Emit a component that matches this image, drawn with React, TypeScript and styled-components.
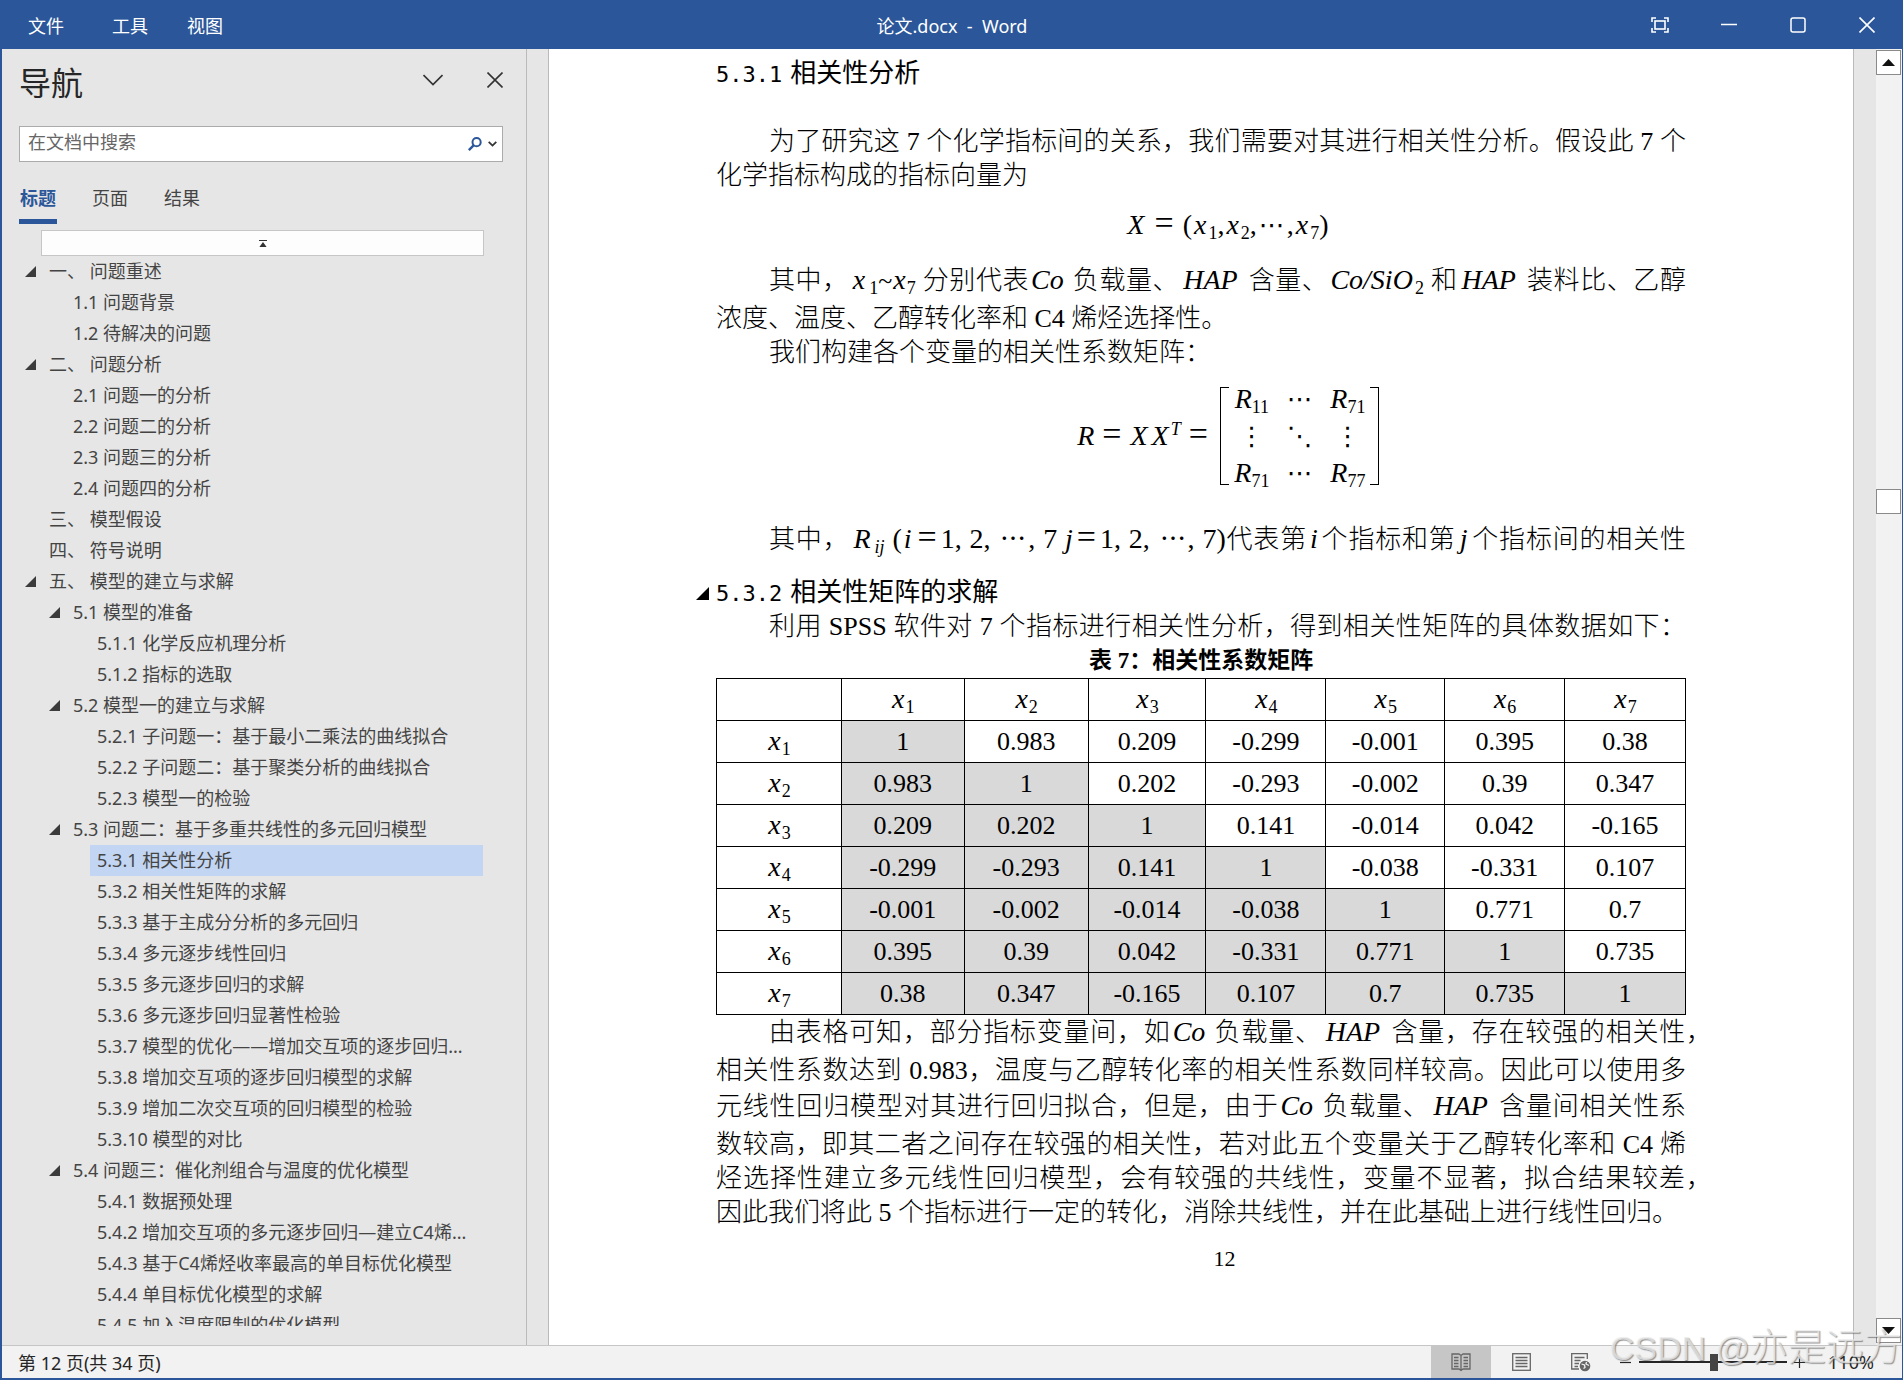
import React from "react";
import styled, { createGlobalStyle } from "styled-components";

const UI_FONT = `"Noto Sans", "Noto Sans CJK SC", sans-serif`;
const DOC_FONT = `"Liberation Serif", "Noto Sans CJK SC", serif`;
const BLUE = "#2b579a";

const GlobalStyle = createGlobalStyle`
  *, *::before, *::after { box-sizing: border-box; }
  body { margin: 0; font-family: ${UI_FONT}; font-size: 18px; color: #444; }
  button, input { font: inherit; color: inherit; margin: 0; }
  button { background: none; border: 0; padding: 0; cursor: pointer; }
  h1, h2, p, ul { margin: 0; padding: 0; font-weight: 400; }
  a { color: inherit; text-decoration: none; }
`;

const Shell = styled.div`
  position: relative;
  display: flex;
  flex-direction: column;
  height: 100vh;
  overflow: hidden;
  background: #e6e6e6;
  border: 0 solid ${BLUE};
  border-width: 0 1px 2px 2px;
`;

/* Title bar */
const TitleBar = styled.header`
  display: grid;
  grid-template-columns: 1fr auto 1fr;
  align-items: center;
  flex: none;
  height: 49px;
  color: #fff;
  background: ${BLUE};
`;
const Menus = styled.nav`
  display: flex;
  padding-left: 26px;
`;
const MenuButton = styled.button<{ $gap?: number }>`
  margin-right: ${(p) => p.$gap ?? 0}px;
`;
const DocTitle = styled.div`
  white-space: pre;
`;
const WindowButtons = styled.div`
  display: flex;
  justify-content: flex-end;
  padding-right: 1px;
`;
const WindowButton = styled.button`
  display: grid;
  place-items: center;
  width: 69px;
  height: 49px;
  svg { display: block; }
`;

/* Body */
const Body = styled.div`
  display: flex;
  flex: 1;
  min-height: 0;
`;
const Sidebar = styled.aside`
  display: flex;
  flex-direction: column;
  flex: none;
  width: 525px;
  padding: 0 23px 19px 17px;
  border-right: 1px solid #bababa;
`;
const Gutter = styled.div<{ $width: number; $side: "left" | "right" }>`
  flex: none;
  width: ${(p) => p.$width}px;
  border-${(p) => p.$side}: 1px solid #bababa;
`;
const PaneHead = styled.div`
  display: flex;
  align-items: flex-start;
  height: 68px;
  gap: 38px;
  padding-top: 15px;
`;
const PaneTitle = styled.h1`
  flex: 1;
  font-size: 32px;
  line-height: 38px;
  color: #262626;
`;
const IconButton = styled.button<{ $width: number }>`
  display: grid;
  place-items: center;
  width: ${(p) => p.$width}px;
  height: 32px;
  svg { display: block; }
`;
const SearchBox = styled.label`
  display: flex;
  align-items: center;
  height: 36px;
  margin-top: 9px;
  padding: 0 3px 0 8px;
  background: #fff;
  border: 1px solid #ababab;
`;
const SearchInput = styled.input`
  flex: 1;
  min-width: 0;
  height: 30px;
  padding: 0 0 4px;
  border: 0;
  outline: 0;
  background: none;
  &::placeholder { color: #666; opacity: 1; }
`;
const Tabs = styled.div`
  display: flex;
  gap: 34px;
  margin-top: 22px;
`;
const Tab = styled.button<{ $active?: boolean }>`
  min-width: 38px;
  height: 40px;
  padding: 0 0 8px;
  line-height: 28px;
  border-bottom: 5px solid ${(p) => (p.$active ? BLUE : "transparent")};
  color: ${(p) => (p.$active ? BLUE : "#444")};
  font-weight: ${(p) => (p.$active ? 700 : 400)};
`;
const JumpTop = styled.button`
  display: grid;
  place-items: center;
  flex: none;
  height: 26px;
  margin: 6px 19px 0 22px;
  background: #fdfdfd;
  border: 1px solid #c6c6c6;
`;
const Tree = styled.ul`
  flex: 1;
  min-height: 0;
  overflow: hidden;
  list-style: none;
  margin: 0 20px 0 0;
`;
const TreeItem = styled.li<{ $level: number }>`
  display: grid;
  grid-template-columns: 17px 1fr;
  align-items: center;
  height: 31px;
  padding-left: ${(p) => (p.$level - 1) * 24 + 6}px;
`;
const Fold = styled.button`
  display: block;
  width: 11px;
  height: 11px;
  background: #3b3b3b;
  clip-path: polygon(100% 0, 100% 100%, 0 100%);
`;
const TreeLink = styled.a<{ $selected?: boolean }>`
  grid-column: 2;
  height: 31px;
  padding-left: 7px;
  line-height: 31px;
  white-space: pre;
  background: ${(p) => (p.$selected ? "#c2d5f2" : "transparent")};
`;

/* Page */
const Page = styled.main`
  flex: 1;
  min-width: 0;
  overflow: hidden;
  background: #fff;
  color: #000;
  font-family: ${DOC_FONT};
  font-size: 26px;
  line-height: 34px;
`;
const Column = styled.article`
  max-width: 970px;
  margin: 0 auto;
  padding-top: 8px;
`;
const Heading = styled.h2<{ $top?: number }>`
  position: relative;
  display: flex;
  align-items: baseline;
  gap: 8px;
  height: 34px;
  margin-top: ${(p) => p.$top ?? 0}px;
  font-size: 26px;
  line-height: 34px;
`;
const HeadingNumber = styled.span`
  font-family: "DejaVu Sans Mono", monospace;
  font-size: 22px;
`;
const HeadingFold = styled.span`
  position: absolute;
  left: -20px;
  top: 11px;
  width: 13px;
  height: 13px;
  background: #000;
  clip-path: polygon(100% 0, 100% 100%, 0 100%);
`;
const Paragraph = styled.p<{ $top?: number }>`
  margin-top: ${(p) => p.$top ?? 0}px;
  font-weight: 300;
`;
const Line = styled.span<{ $indent?: boolean; $full?: boolean; $after?: number; $hang?: boolean }>`
  display: block;
  padding-left: ${(p) => (p.$indent ? 53 : 0)}px;
  padding-bottom: ${(p) => p.$after ?? 0}px;
  margin-right: ${(p) => (p.$hang ? -26 : 0)}px;
  white-space: ${(p) => (p.$full ? "normal" : "nowrap")};
  text-align-last: ${(p) => (p.$full ? "justify" : "left")};
`;
const Formula = styled.div<{ $top: number }>`
  display: flex;
  justify-content: center;
  align-items: center;
  margin-top: ${(p) => p.$top}px;
  padding-left: 53px;
  font-size: 28px;
  white-space: pre;
`;
const Var = styled.i<{ $gap?: number }>`
  margin: 0 ${(p) => p.$gap ?? 0}px;
  font-size: 28px;
  line-height: 0;
`;
const Sub = styled.sub`
  font-size: 18px;
  font-style: normal;
  line-height: 0;
  vertical-align: -5px;
`;
const Sup = styled.sup`
  font-size: 18px;
  line-height: 0;
  vertical-align: 10px;
`;
const Big = styled.span`
  font-size: 28px;
  line-height: 0;
`;
const Equals = styled.span<{ $gap: number }>`
  margin: 0 ${(p) => p.$gap}px;
  font-size: 34px;
  line-height: 0;
`;
const Dots = styled.span<{ $gap?: number }>`
  margin: 0 ${(p) => p.$gap ?? 0}px;
  font-family: "DejaVu Sans", sans-serif;
  font-size: 26px;
  line-height: 0;
`;
const Matrix = styled.div`
  position: relative;
  display: grid;
  grid-template-columns: repeat(3, 48px);
  grid-auto-rows: 37px;
  place-items: center;
  align-content: center;
  height: 98px;
  margin-left: 4px;
  padding: 0 6px 0 7px;
  border: solid #000;
  border-width: 0 1px;
  &::before, &::after {
    content: "";
    position: absolute;
    top: 0;
    bottom: 0;
    width: 8px;
    border: solid #000;
    border-width: 1px 0;
  }
  &::before { left: 0; }
  &::after { right: 0; }
`;
const DataTable = styled.table`
  width: 100%;
  table-layout: fixed;
  border-collapse: collapse;
  caption {
    height: 34px;
    font-size: 23px;
    font-weight: 700;
  }
  th, td {
    height: 42px;
    padding: 0;
    border: 1px solid #000;
    text-align: center;
    font-weight: 400;
    line-height: 34px;
  }
`;
const Col = styled.col<{ $share: number }>`
  width: ${(p) => p.$share}%;
`;
const Cell = styled.td<{ $shaded: boolean }>`
  background: ${(p) => (p.$shaded ? "#d9d9d9" : "transparent")};
`;
const PageNumber = styled.div`
  margin-top: 12px;
  padding-left: 47px;
  text-align: center;
  font-size: 22px;
`;

/* Scroll bar */
const ScrollBar = styled.div`
  display: flex;
  flex-direction: column;
  flex: none;
  width: 26px;
  padding: 1px 1px 2px 0;
  background: #f2f2f2;
`;
const ScrollButton = styled.button`
  display: grid;
  place-items: center;
  flex: none;
  width: 25px;
  height: 25px;
  background: #fff;
  border: 1px solid #8a8a8a;
`;
const Track = styled.div<{ $grow: number }>`
  flex: ${(p) => p.$grow} 1 0;
`;

/* Status bar */
const StatusBar = styled.footer`
  display: flex;
  align-items: center;
  flex: none;
  height: 33px;
  padding: 0 11px 0 16px;
  color: #262626;
  background: #f2f2f2;
  border-top: 1px solid #c6c6c6;
`;
const PageCount = styled.span`
  flex: 1;
`;
const StatusButton = styled.button<{ $width: number; $active?: boolean }>`
  display: grid;
  place-items: center;
  width: ${(p) => p.$width}px;
  height: 32px;
  background: ${(p) => (p.$active ? "#c6c6c6" : "transparent")};
  svg { display: block; }
`;
const Zoom = styled.input`
  appearance: none;
  width: 148px;
  height: 18px;
  background: linear-gradient(#262626, #262626) center / 100% 2px no-repeat;
  &::-webkit-slider-thumb {
    appearance: none;
    width: 8px;
    height: 17px;
    background: #444;
  }
`;
const Watermark = styled.div`
  position: absolute;
  right: 0;
  bottom: 8px;
  display: flex;
  align-items: baseline;
  font-family: "Liberation Sans", "Noto Sans CJK SC", sans-serif;
  font-size: 38px;
  font-weight: 300;
  line-height: 44px;
  white-space: pre;
  color: rgba(235, 235, 235, 0.75);
  text-shadow: 1px 1px 1px rgba(90, 90, 90, 0.65);
  pointer-events: none;
`;
const WatermarkLatin = styled.span`
  font-size: 34px;
`;

type Item = { level: number; text: string; open?: boolean };
const outline: Item[] = [
  { level: 1, text: "一、 问题重述", open: true },
  { level: 2, text: "1.1 问题背景" },
  { level: 2, text: "1.2 待解决的问题" },
  { level: 1, text: "二、 问题分析", open: true },
  { level: 2, text: "2.1 问题一的分析" },
  { level: 2, text: "2.2 问题二的分析" },
  { level: 2, text: "2.3 问题三的分析" },
  { level: 2, text: "2.4 问题四的分析" },
  { level: 1, text: "三、 模型假设" },
  { level: 1, text: "四、 符号说明" },
  { level: 1, text: "五、 模型的建立与求解", open: true },
  { level: 2, text: "5.1 模型的准备", open: true },
  { level: 3, text: "5.1.1 化学反应机理分析" },
  { level: 3, text: "5.1.2 指标的选取" },
  { level: 2, text: "5.2 模型一的建立与求解", open: true },
  { level: 3, text: "5.2.1 子问题一：基于最小二乘法的曲线拟合" },
  { level: 3, text: "5.2.2 子问题二：基于聚类分析的曲线拟合" },
  { level: 3, text: "5.2.3 模型一的检验" },
  { level: 2, text: "5.3 问题二：基于多重共线性的多元回归模型", open: true },
  { level: 3, text: "5.3.1 相关性分析" },
  { level: 3, text: "5.3.2 相关性矩阵的求解" },
  { level: 3, text: "5.3.3 基于主成分分析的多元回归" },
  { level: 3, text: "5.3.4 多元逐步线性回归" },
  { level: 3, text: "5.3.5 多元逐步回归的求解" },
  { level: 3, text: "5.3.6 多元逐步回归显著性检验" },
  { level: 3, text: "5.3.7 模型的优化——增加交互项的逐步回归..." },
  { level: 3, text: "5.3.8 增加交互项的逐步回归模型的求解" },
  { level: 3, text: "5.3.9 增加二次交互项的回归模型的检验" },
  { level: 3, text: "5.3.10 模型的对比" },
  { level: 2, text: "5.4 问题三：催化剂组合与温度的优化模型", open: true },
  { level: 3, text: "5.4.1 数据预处理" },
  { level: 3, text: "5.4.2 增加交互项的多元逐步回归—建立C4烯..." },
  { level: 3, text: "5.4.3 基于C4烯烃收率最高的单目标优化模型" },
  { level: 3, text: "5.4.4 单目标优化模型的求解" },
  { level: 3, text: "5.4.5 加入温度限制的优化模型" },
];
const CURRENT = "5.3.1 相关性分析";

const matrix = [
  ["1", "0.983", "0.209", "-0.299", "-0.001", "0.395", "0.38"],
  ["0.983", "1", "0.202", "-0.293", "-0.002", "0.39", "0.347"],
  ["0.209", "0.202", "1", "0.141", "-0.014", "0.042", "-0.165"],
  ["-0.299", "-0.293", "0.141", "1", "-0.038", "-0.331", "0.107"],
  ["-0.001", "-0.002", "-0.014", "-0.038", "1", "0.771", "0.7"],
  ["0.395", "0.39", "0.042", "-0.331", "0.771", "1", "0.735"],
  ["0.38", "0.347", "-0.165", "0.107", "0.7", "0.735", "1"],
];
const columnWeights = [125, 123, 124, 118, 120, 119, 120, 121];
const totalWeight = columnWeights.reduce((a, b) => a + b, 0);

const X = ({ n, gap = 1 }: { n: number; gap?: number }) => (
  <>
    <Var $gap={gap}>x</Var>
    <Sub>{n}</Sub>
  </>
);
const R = ({ n }: { n: string }) => (
  <span>
    <Var>R</Var>
    <Sub>{n}</Sub>
  </span>
);

const Arrow = ({ down }: { down?: boolean }) => (
  <svg width="13" height="7" viewBox="0 0 13 7">
    <path d={down ? "M0 0h13L6.5 7z" : "M0 7h13L6.5 0z"} fill="#111" />
  </svg>
);

export default function App() {
  return (
    <Shell lang="zh-CN">
      <GlobalStyle />
      <TitleBar>
        <Menus aria-label="菜单">
          <MenuButton $gap={48}>文件</MenuButton>
          <MenuButton $gap={39}>工具</MenuButton>
          <MenuButton>视图</MenuButton>
        </Menus>
        <DocTitle>论文.docx  -  Word</DocTitle>
        <WindowButtons>
          <WindowButton aria-label="全屏">
            <svg width="18" height="16" viewBox="0 0 18 16" fill="none" stroke="#fff" strokeWidth="1.6">
              <path d="M1 5V1h4M13 1h4v4M17 11v4h-4M5 15H1v-4" />
              <rect x="4" y="4" width="10" height="8" />
            </svg>
          </WindowButton>
          <WindowButton aria-label="最小化">
            <svg width="16" height="16" viewBox="0 0 16 16">
              <path d="M0 7.5h16" stroke="#fff" strokeWidth="1.5" />
            </svg>
          </WindowButton>
          <WindowButton aria-label="最大化">
            <svg width="16" height="16" viewBox="0 0 16 16" fill="none">
              <rect x="1" y="1" width="14" height="14" rx="2" stroke="#fff" strokeWidth="1.5" />
            </svg>
          </WindowButton>
          <WindowButton aria-label="关闭">
            <svg width="16" height="16" viewBox="0 0 16 16">
              <path d="M.5.5l15 15M15.5.5l-15 15" stroke="#fff" strokeWidth="1.6" />
            </svg>
          </WindowButton>
        </WindowButtons>
      </TitleBar>

      <Body>
        <Sidebar>
          <PaneHead>
            <PaneTitle>导航</PaneTitle>
            <IconButton $width={32} aria-label="选项">
              <svg width="20" height="12" viewBox="0 0 20 12" fill="none">
                <path d="M.5 1L10 10.5 19.5 1" stroke="#333" strokeWidth="1.7" />
              </svg>
            </IconButton>
            <IconButton $width={16} aria-label="关闭窗格">
              <svg width="16" height="16" viewBox="0 0 16 16">
                <path d="M.5.5l15 15M15.5.5l-15 15" stroke="#333" strokeWidth="1.6" />
              </svg>
            </IconButton>
          </PaneHead>
          <SearchBox>
            <SearchInput type="text" placeholder="在文档中搜索" aria-label="在文档中搜索" />
            <IconButton $width={20} aria-label="搜索">
              <svg width="14" height="14" viewBox="0 0 14 14" fill="none" stroke={BLUE}>
                <circle cx="8.6" cy="5.2" r="4.1" strokeWidth="2" />
                <path d="M5.6 8.3L.8 13.1" strokeWidth="2.4" />
              </svg>
            </IconButton>
            <IconButton $width={14} aria-label="搜索选项">
              <svg width="9" height="6" viewBox="0 0 9 6" fill="none">
                <path d="M.7 .9L4.5 4.6 8.3 .9" stroke="#333" strokeWidth="1.8" />
              </svg>
            </IconButton>
          </SearchBox>
          <Tabs>
            <Tab $active>标题</Tab>
            <Tab>页面</Tab>
            <Tab>结果</Tab>
          </Tabs>
          <JumpTop aria-label="跳到开头">
            <svg width="8" height="7" viewBox="0 0 8 7">
              <path d="M0 0h8v1H0zM4 2l3.6 5H.4z" fill="#333" />
            </svg>
          </JumpTop>
          <Tree>
            {outline.map((item) => (
              <TreeItem key={item.text} $level={item.level}>
                {item.open && <Fold aria-label="折叠" />}
                <TreeLink href="#" $selected={item.text === CURRENT}>
                  {item.text}
                </TreeLink>
              </TreeItem>
            ))}
          </Tree>
        </Sidebar>
        <Gutter $width={22} $side="right" />

        <Page>
          <Column>
            <Heading>
              <HeadingNumber>5.3.1</HeadingNumber>
              相关性分析
            </Heading>
            <Paragraph $top={34}>
              <Line $indent $full>为了研究这 7 个化学指标间的关系，我们需要对其进行相关性分析。假设此 7 个</Line>
              <Line>化学指标构成的指标向量为</Line>
            </Paragraph>
            <Formula $top={15}>
              <span>
                <Var $gap={1}>X</Var>
                <Equals $gap={9}>=</Equals>(<X n={1} gap={2} />,<X n={2} gap={2} />,<Dots $gap={2}>⋯</Dots>,
                <X n={7} gap={2} />)
              </span>
            </Formula>
            <Paragraph $top={22}>
              <Line $indent $full $after={4}>
                其中，
                <Var $gap={4}>x</Var>
                <Sub>1</Sub>~<X n={7} /> 分别代表<Var $gap={2}>Co</Var> 负载量、<Var $gap={4}>HAP</Var> 含量、
                <Var $gap={2}>Co/SiO</Var>
                <Sub>2</Sub> 和<Var $gap={4}>HAP</Var> 装料比、乙醇
              </Line>
              <Line>浓度、温度、乙醇转化率和 C4 烯烃选择性。</Line>
              <Line $indent>我们构建各个变量的相关性系数矩阵：</Line>
            </Paragraph>
            <Formula $top={17}>
              <span>
                <Var $gap={1}>R</Var>
                <Equals $gap={7}>=</Equals>
                <Var $gap={2}>X</Var>
                <Var $gap={2}>X</Var>
                <Sup>
                  <i>T</i>
                </Sup>
                <Equals $gap={8}>=</Equals>
              </span>
              <Matrix>
                <R n="11" />
                <Dots>⋯</Dots>
                <R n="71" />
                <Dots>⋮</Dots>
                <Dots>⋱</Dots>
                <Dots>⋮</Dots>
                <R n="71" />
                <Dots>⋯</Dots>
                <R n="77" />
              </Matrix>
            </Formula>
            <Paragraph $top={38}>
              <Line $indent $full>
                其中，<Var $gap={4}>R</Var>
                <Sub>
                  <i>ij</i>
                </Sub>
                <Big>
                  {" "}
                  (<Var $gap={2}>i</Var>
                  <Equals $gap={4}>=</Equals>1, 2, <Dots $gap={2}>⋯</Dots>, 7 <Var>j</Var>
                  <Equals $gap={4}>=</Equals>1, 2, <Dots $gap={2}>⋯</Dots>, 7)
                </Big>
                代表第<Var $gap={3}>i</Var>个指标和第<Var $gap={4}>j</Var>个指标间的相关性
              </Line>
            </Paragraph>
            <Heading $top={19}>
              <HeadingFold />
              <HeadingNumber>5.3.2</HeadingNumber>
              相关性矩阵的求解
            </Heading>
            <Paragraph>
              <Line $indent $full>
                利用 SPSS 软件对 7 个指标进行相关性分析，得到相关性矩阵的具体数据如下：
              </Line>
            </Paragraph>
            <DataTable>
              <caption>表 7：相关性系数矩阵</caption>
              <colgroup>
                {columnWeights.map((weight, i) => (
                  <Col key={i} $share={(weight / totalWeight) * 100} />
                ))}
              </colgroup>
              <thead>
                <tr>
                  <td />
                  {matrix.map((_, i) => (
                    <th key={i} scope="col">
                      <X n={i + 1} />
                    </th>
                  ))}
                </tr>
              </thead>
              <tbody>
                {matrix.map((row, r) => (
                  <tr key={r}>
                    <th scope="row">
                      <X n={r + 1} />
                    </th>
                    {row.map((value, c) => (
                      <Cell key={c} $shaded={c <= r}>
                        {value}
                      </Cell>
                    ))}
                  </tr>
                ))}
              </tbody>
            </DataTable>
            <Paragraph $top={1}>
              <Line $indent $full $hang $after={4}>
                由表格可知，部分指标变量间，如<Var $gap={2}>Co</Var> 负载量、<Var $gap={4}>HAP</Var> 含量，存在较强的相关性，
              </Line>
              <Line $full $after={2}>
                相关性系数达到 0.983，温度与乙醇转化率的相关性系数同样较高。因此可以使用多
              </Line>
              <Line $full $after={4}>
                元线性回归模型对其进行回归拟合，但是，由于<Var $gap={2}>Co</Var> 负载量、<Var $gap={4}>HAP</Var> 含量间相关性系
              </Line>
              <Line $full>数较高，即其二者之间存在较强的相关性，若对此五个变量关于乙醇转化率和 C4 烯</Line>
              <Line $full $hang>
                烃选择性建立多元线性回归模型，会有较强的共线性，变量不显著，拟合结果较差，
              </Line>
              <Line>因此我们将此 5 个指标进行一定的转化，消除共线性，并在此基础上进行线性回归。</Line>
            </Paragraph>
            <PageNumber>12</PageNumber>
          </Column>
        </Page>

        <Gutter $width={23} $side="left" />
        <ScrollBar>
          <ScrollButton aria-label="向上滚动">
            <Arrow />
          </ScrollButton>
          <Track $grow={34} />
          <ScrollButton aria-label="滚动滑块" />
          <Track $grow={66} />
          <ScrollButton aria-label="向下滚动">
            <Arrow down />
          </ScrollButton>
        </ScrollBar>
      </Body>

      <StatusBar>
        <PageCount>第 12 页(共 34 页)</PageCount>
        <StatusButton $width={60} $active aria-label="阅读视图">
          <svg width="20" height="19" viewBox="0 0 20 19" fill="none" stroke="#666" strokeWidth="1.3">
            <path d="M1 1h7l2 1.5L12 1h7v15h-7l-2 1.5L8 16H1zM10 2v16" />
            <path d="M3 4.5h4.5M3 7.5h4.5M3 10.5h4.5M3 13.5h4.5M12.5 4.5H17M12.5 7.5H17M12.5 10.5H17M12.5 13.5H17" />
          </svg>
        </StatusButton>
        <StatusButton $width={60} aria-label="页面视图">
          <svg width="19" height="18" viewBox="0 0 19 18" fill="none" stroke="#666" strokeWidth="1.3">
            <rect x=".7" y=".7" width="17.6" height="16.6" />
            <path d="M3.5 4.500h12M3.5 7.500h12M3.5 10.500h12M3.5 13.500h12" />
          </svg>
        </StatusButton>
        <StatusButton $width={60} aria-label="Web 版式视图">
          <svg width="20" height="19" viewBox="0 0 20 19" fill="none" stroke="#666" strokeWidth="1.3">
            <path d="M8 16H.7V.7H16.300V6M3.500 4.500h10M3.500 7.500h6M3.500 10.500h4.500M3.500 13.500H7" />
            <circle cx="14" cy="13" r="5.300" fill="#666" stroke="none" />
            <path d="M10.500 11l3 1 .5 2.500-1.500 1M15.500 9l-.5 2 3 1.500" stroke="#f2f2f2" />
          </svg>
        </StatusButton>
        <StatusButton $width={28} aria-label="缩小">
          <svg width="11" height="11" viewBox="0 0 11 11">
            <path d="M0 5.500h11" stroke="#262626" strokeWidth="1.200" />
          </svg>
        </StatusButton>
        <Zoom type="range" min="10" max="210" defaultValue="112" aria-label="显示比例" />
        <StatusButton $width={24} aria-label="放大">
          <svg width="11" height="11" viewBox="0 0 11 11">
            <path d="M0 5.500h11M5.500 0v11" stroke="#262626" strokeWidth="1.200" />
          </svg>
        </StatusButton>
        <StatusButton $width={80}>110%</StatusButton>
      </StatusBar>

      <Watermark>
        <WatermarkLatin>CSDN @</WatermarkLatin>亦是远方
      </Watermark>
    </Shell>
  );
}
